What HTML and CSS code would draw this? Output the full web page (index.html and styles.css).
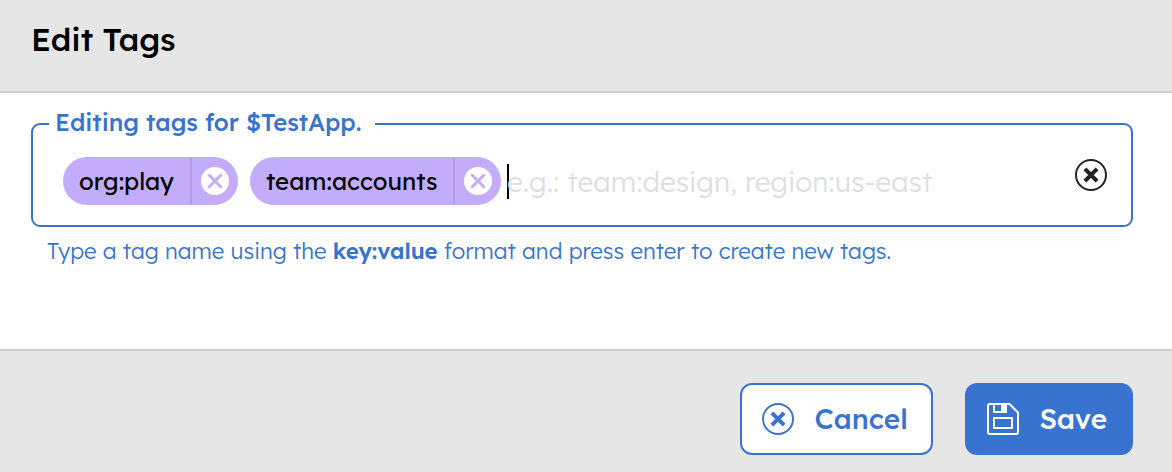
FILE: index.html
```html
<!DOCTYPE html>
<html lang="en">
<head>
<meta charset="utf-8">
<title>Edit Tags</title>
<link rel="stylesheet" href="styles.css">
</head>
<body>
<div class="dialog">
  <header class="header"><h1 class="title">Edit Tags</h1></header>
  <main class="body">
    <fieldset class="field">
      <legend class="legend">Editing tags for $TestApp.</legend>
      <div class="row">
        <span class="chip chip-org"><span class="chip-label">org:play</span><span class="chip-remove"><svg width="28" height="28" viewBox="0 0 28 28"><circle cx="14" cy="14" r="14" fill="#fff"/><path d="M8.3 8.3l11.4 11.4M19.7 8.3L8.3 19.7" stroke="#c3adfa" stroke-width="3" stroke-linecap="round"/></svg></span></span>
        <span class="chip chip-team"><span class="chip-label">team:accounts</span><span class="chip-remove"><svg width="28" height="28" viewBox="0 0 28 28"><circle cx="14" cy="14" r="14" fill="#fff"/><path d="M8.3 8.3l11.4 11.4M19.7 8.3L8.3 19.7" stroke="#c3adfa" stroke-width="3" stroke-linecap="round"/></svg></span></span>
        <span class="entry"><span class="placeholder">e.g.: team:design, region:us-east</span></span>
        <svg class="clear" width="32" height="32" viewBox="0 0 32 32" fill="none" stroke="currentColor"><circle cx="16" cy="16" r="15" stroke-width="2"/><path d="M9.9 9.9l12.2 12.2M22.1 9.9L9.9 22.1" stroke-width="4.1"/></svg>
      </div>
    </fieldset>
    <p class="hint">Type a tag name using the <b class="hint-key">key:value</b> format and press enter to create new tags.</p>
  </main>
  <footer class="footer">
    <button class="button cancel"><svg width="32" height="32" viewBox="0 0 32 32" fill="none" stroke="currentColor"><circle cx="16" cy="16" r="15" stroke-width="2"/><path d="M9.9 9.9l12.2 12.2M22.1 9.9L9.9 22.1" stroke-width="4.1"/></svg><span class="button-label">Cancel</span></button>
    <button class="button save"><svg width="32" height="32" viewBox="0 0 32 32" fill="none" stroke="currentColor" stroke-width="2"><path d="M3 1H22.5L31 9.5V29a2 2 0 0 1-2 2H3a2 2 0 0 1-2-2V3a2 2 0 0 1 2-2z"/><path d="M7 1V9H19V1M7 15H25V25H7z"/><path d="M14 1h6v9h-6z" fill="currentColor" stroke="none"/></svg><span class="button-label">Save</span></button>
  </footer>
</div>
</body>
</html>
```
FILE: styles.css
```css
* { box-sizing: border-box; }
body { margin: 0; font-family: Lexend, Lato, sans-serif; background: #fff; }
svg { display: block; flex: none; }
.dialog { width: 1172px; height: 472px; display: flex; flex-direction: column; overflow: hidden; }
.header { height: 93px; flex: none; padding: 19px 31px; background: #e6e6e6; border-bottom: 2px solid #cecece; }
.title { margin: 0; font-size: 32px; line-height: 40px; font-weight: 500; color: #000; }
.body { height: 256px; flex: none; padding: 17px 39px 0 31px; }
.field { margin: 0; height: 117px; min-width: 0; padding: 19px 24px 0 16px; border: 2px solid #3874cf; border-radius: 9px; }
.legend { width: 326px; height: 28px; padding: 0 6px; font-size: 24px; line-height: 24px; font-weight: 500; color: #3874cf; white-space: nowrap; }
.row { display: flex; align-items: flex-start; padding-left: 14px; white-space: nowrap; }
.chip { display: flex; height: 48px; margin-right: 12px; border-radius: 24px; overflow: hidden; background: #c3adfa; color: #000; font-size: 24px; line-height: 49px; }
.chip-org { width: 175px; }
.chip-team { width: 251px; margin-right: 6px; }
.chip-label { flex: 1; padding-left: 16px; }
.chip-remove { width: 48px; padding: 10px 0 0 9px; border-left: 2px solid #b09ce1; }
.entry { height: 35px; margin-top: 7px; border-left: 2px solid #000; }
.placeholder { display: block; margin-left: -2px; font-size: 28px; line-height: 35px; font-weight: 300; color: #dedede; }
.clear { margin: 2px 0 0 auto; color: #222; }
.hint { margin: 9px 0 0; padding-left: 16px; font-size: 22.25px; line-height: 30px; color: #3874cf; white-space: nowrap; font-weight: 300; }
.hint-key { font-weight: 600; letter-spacing: -0.1px; }
.footer { height: 123px; flex: none; display: flex; justify-content: flex-end; gap: 32px; padding: 32px 39px 0 0; background: #e6e6e6; border-top: 2px solid #cecece; }
.button { display: flex; align-items: center; gap: 20.5px; height: 72px; padding: 0 0 0 20px; border: 2px solid #3874cf; border-radius: 12px; font-family: inherit; font-size: 28px; font-weight: 500; white-space: nowrap; }
.button-label { padding-bottom: 2px; }
.cancel { width: 193px; background: #fff; color: #3874cf; }
.save { width: 168px; background: #3874cf; color: #fff; }
```
